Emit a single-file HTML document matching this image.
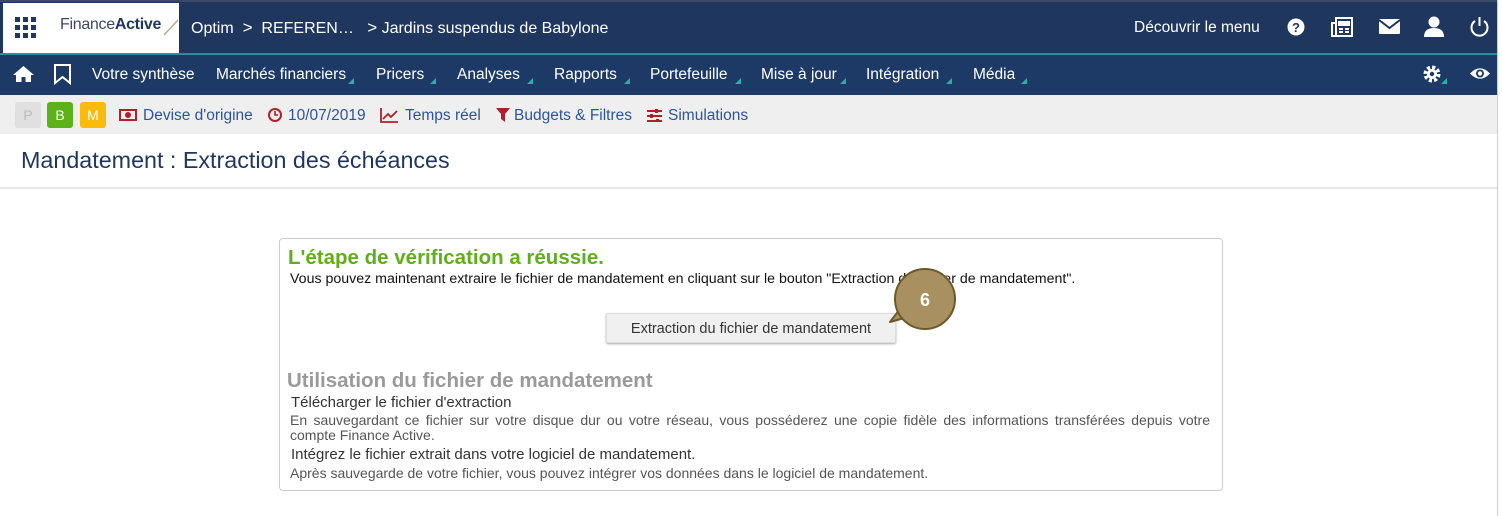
<!DOCTYPE html>
<html><head><meta charset="utf-8"><style>
*{margin:0;padding:0;box-sizing:border-box}
body{width:1502px;height:516px;overflow:hidden;background:#fff;font-family:"Liberation Sans",Arial,sans-serif;position:relative}
.abs{position:absolute;white-space:nowrap}
.top{left:0;top:0;width:1502px;height:54px;background:#1f365f;border-top:2px solid #3a4a66}
.logo{left:3px;top:3px;width:176px;height:50px;background:#fff}
.teal{left:0;top:53px;width:1502px;height:2px;background:#2a8f9a}
.nav{left:0;top:55px;width:1502px;height:40px;background:#1d3a66}
.w{color:#fff;font-size:15.5px}
.tri{position:absolute;width:0;height:0;border-left:6px solid transparent;border-bottom:6px solid #2ab0a8}
.tb{left:0;top:95px;width:1498px;height:39px;background:#efefef}
.lk{color:#2c5597;font-size:15.5px}
.box{left:279px;top:238px;width:944px;height:253px;border:1px solid #ccc;border-radius:4px}
</style></head><body>
<div class="abs top"></div>
<div class="abs logo"></div>
<svg class="abs" style="left:15px;top:17px" width="22" height="22" viewBox="0 0 22 22" fill="#1f365f">
<rect x="0" y="0" width="5" height="5"/><rect x="8" y="0" width="5" height="5"/><rect x="16" y="0" width="5" height="5"/>
<rect x="0" y="8" width="5" height="5"/><rect x="8" y="8" width="5" height="5"/><rect x="16" y="8" width="5" height="5"/>
<rect x="0" y="16" width="5" height="5"/><rect x="8" y="16" width="5" height="5"/><rect x="16" y="16" width="5" height="5"/></svg>
<div class="abs" style="left:60px;top:16px;font-size:16px;color:#3a4a66;letter-spacing:-0.3px">Finance<b style="color:#1f365f">Active</b></div>
<svg class="abs" style="left:163px;top:18px" width="16" height="18"><line x1="1" y1="17" x2="15" y2="2" stroke="#b8a57a" stroke-width="1.3"/></svg>
<div class="abs w" style="left:191px;top:18px;font-size:16px">Optim&nbsp;&nbsp;<span style="font-size:17px">&gt;</span>&nbsp;&nbsp;REFEREN…&nbsp;&nbsp;&nbsp;<span style="font-size:17px">&gt;</span> Jardins suspendus de Babylone</div>
<div class="abs w" style="left:1134px;top:19px">Découvrir le menu</div>
<svg class="abs" style="left:1287px;top:18px" width="18" height="18"><circle cx="9" cy="9" r="8.5" fill="#fff"/><text x="9" y="14" font-size="13" font-weight="bold" text-anchor="middle" fill="#1f365f" font-family="Liberation Sans">?</text></svg>
<svg class="abs" style="left:1331px;top:17px" width="22" height="20" fill="none" stroke="#fff" stroke-width="2"><rect x="5" y="1" width="16" height="18"/><path d="M5 6H1V19H5"/><rect x="8" y="5" width="10" height="3" fill="#fff"/><path d="M8 12h4M14 12h4M8 15h4M14 15h4"/></svg>
<svg class="abs" style="left:1379px;top:19px" width="21" height="15"><rect width="21" height="15" rx="1" fill="#fff"/><path d="M0 1L10.5 9L21 1" stroke="#1f365f" stroke-width="2" fill="none"/></svg>
<svg class="abs" style="left:1424px;top:16px" width="20" height="21" fill="#fff"><circle cx="10" cy="6" r="5.5"/><path d="M0 21Q0 12 10 12Q20 12 20 21Z"/></svg>
<svg class="abs" style="left:1469px;top:16px" width="21" height="21" fill="none" stroke="#fff" stroke-width="2"><path d="M6 5A8 8 0 1 0 15 5"/><line x1="10.5" y1="1" x2="10.5" y2="10"/></svg>
<div class="abs teal"></div>
<div class="abs nav"></div>
<svg class="abs" style="left:13px;top:65px" width="21" height="18" fill="#fff"><path d="M10.5 1L0 10H3V17H8.5V12H12.5V17H18V10H21Z"/></svg>
<svg class="abs" style="left:54px;top:64px" width="17" height="21" fill="none" stroke="#fff" stroke-width="2"><path d="M1 1H16V19L8.5 13L1 19Z"/></svg>
<div class="abs w" style="left:92px;top:66px">Votre synthèse</div>
<div class="abs w" style="left:216px;top:66px">Marchés financiers</div><div class="tri" style="left:348px;top:78px"></div>
<div class="abs w" style="left:376px;top:66px">Pricers</div><div class="tri" style="left:430px;top:78px"></div>
<div class="abs w" style="left:457px;top:66px">Analyses</div><div class="tri" style="left:527px;top:78px"></div>
<div class="abs w" style="left:554px;top:66px">Rapports</div><div class="tri" style="left:624px;top:78px"></div>
<div class="abs w" style="left:650px;top:66px">Portefeuille</div><div class="tri" style="left:735px;top:78px"></div>
<div class="abs w" style="left:761px;top:66px">Mise à jour</div><div class="tri" style="left:840px;top:78px"></div>
<div class="abs w" style="left:866px;top:66px">Intégration</div><div class="tri" style="left:946px;top:78px"></div>
<div class="abs w" style="left:973px;top:66px">Média</div><div class="tri" style="left:1021px;top:78px"></div>
<svg class="abs" style="left:1423px;top:65px" width="18" height="18"><circle cx="9" cy="9" r="6.5" fill="none" stroke="#fff" stroke-width="4" stroke-dasharray="3 2.1"/><circle cx="9" cy="9" r="5" fill="#fff"/><circle cx="9" cy="9" r="2.2" fill="#1d3a66"/></svg>
<div class="tri" style="left:1441px;top:78px"></div>
<svg class="abs" style="left:1469px;top:66px" width="22" height="15"><path d="M1 7.5Q11 -3 21 7.5Q11 18 1 7.5Z" fill="#fff"/><circle cx="11" cy="7.5" r="4" fill="#1d3a66"/><circle cx="11" cy="7.5" r="2.2" fill="#fff"/></svg>
<div class="abs tb"></div>
<div class="abs" style="left:15px;top:102px;width:26px;height:26px;background:#e0e0e0;border-radius:3px;color:#bbb;font-size:14px;text-align:center;line-height:26px">P</div>
<div class="abs" style="left:47px;top:102px;width:26px;height:26px;background:#5db21a;border-radius:3px;color:#fff;font-size:14px;text-align:center;line-height:26px">B</div>
<div class="abs" style="left:80px;top:102px;width:26px;height:26px;background:#fbbb0c;border-radius:3px;color:#fff;font-size:14px;text-align:center;line-height:26px">M</div>
<svg class="abs" style="left:119px;top:109px" width="18" height="12"><rect x="1" y="1" width="16" height="10" fill="none" stroke="#b0202a" stroke-width="2"/><circle cx="9" cy="6" r="3" fill="#b0202a"/></svg>
<div class="abs lk" style="left:143px;top:107px">Devise d'origine</div>
<svg class="abs" style="left:267px;top:107px" width="16" height="16"><circle cx="8" cy="8" r="6" fill="none" stroke="#b0202a" stroke-width="2"/><path d="M8 4V8H11" stroke="#b0202a" stroke-width="1.6" fill="none"/></svg>
<div class="abs lk" style="left:288px;top:107px">10/07/2019</div>
<svg class="abs" style="left:380px;top:107px" width="18" height="16" fill="none" stroke="#b0202a" stroke-width="1.8"><path d="M1 1V15H18"/><path d="M3 12L8 7L11 10L17 4"/></svg>
<div class="abs lk" style="left:405px;top:107px">Temps réel</div>
<svg class="abs" style="left:496px;top:108px" width="14" height="14" fill="#b0202a"><path d="M0 0H14L9 6V14L5 11V6Z"/></svg>
<div class="abs lk" style="left:514px;top:107px">Budgets &amp; Filtres</div>
<svg class="abs" style="left:647px;top:109px" width="15" height="13" fill="#b0202a"><rect y="1" width="15" height="2"/><rect y="6" width="15" height="2"/><rect y="11" width="15" height="2"/><rect x="8" y="0" width="3" height="4"/><rect x="3" y="5" width="3" height="4"/><rect x="9" y="10" width="3" height="4"/></svg>
<div class="abs lk" style="left:668px;top:107px">Simulations</div>
<div class="abs" style="left:21px;top:147px;font-size:23.3px;color:#1f365f">Mandatement : Extraction des échéances</div>
<div class="abs" style="left:0;top:187px;width:1498px;height:2px;background:#e8e8e8"></div>
<div class="abs" style="left:1497px;top:0;width:5px;height:516px;background:#fff;border-left:1px solid #ccc"></div>
<div class="abs box"></div>
<div class="abs" style="left:288px;top:246px;font-size:20.5px;font-weight:bold;color:#5fae1c">L'étape de vérification a réussie.</div>
<div class="abs" style="left:290px;top:271px;font-size:14.2px;color:#111">Vous pouvez maintenant extraire le fichier de mandatement en cliquant sur le bouton "Extraction du fichier de mandatement".</div>
<div class="abs" style="left:606px;top:313px;width:290px;height:30px;background:#f0f0f0;border:1px solid #ddd;border-radius:2px;box-shadow:0 1px 2px #aaa;font-size:14.5px;color:#333;text-align:center;line-height:30px">Extraction du fichier de mandatement</div>
<svg class="abs" style="left:876px;top:264px" width="84" height="68"><path d="M14 58L27 41L43 50Z" fill="#a89060" stroke="#6d5a2a" stroke-width="2" stroke-linejoin="round"/><circle cx="49" cy="35" r="30" fill="#a89060" stroke="#6d5a2a" stroke-width="2"/><text x="49" y="42" font-size="18" font-weight="bold" fill="#fff" text-anchor="middle" font-family="Liberation Sans">6</text></svg>
<div class="abs" style="left:287px;top:369px;font-size:20.5px;font-weight:bold;color:#9a9a9a">Utilisation du fichier de mandatement</div>
<div class="abs" style="left:291px;top:394px;font-size:15px;color:#333">Télécharger le fichier d'extraction</div>
<div class="abs" style="left:290px;top:413px;width:920px;white-space:normal;font-size:14px;color:#555;line-height:15px;text-align:justify;text-align-last:left">En sauvegardant ce fichier sur votre disque dur ou votre réseau, vous posséderez une copie fidèle des informations transférées depuis votre compte Finance Active.</div>
<div class="abs" style="left:291px;top:446px;font-size:15px;color:#333">Intégrez le fichier extrait dans votre logiciel de mandatement.</div>
<div class="abs" style="left:290px;top:465px;font-size:14px;color:#555">Après sauvegarde de votre fichier, vous pouvez intégrer vos données dans le logiciel de mandatement.</div>
</body></html>
